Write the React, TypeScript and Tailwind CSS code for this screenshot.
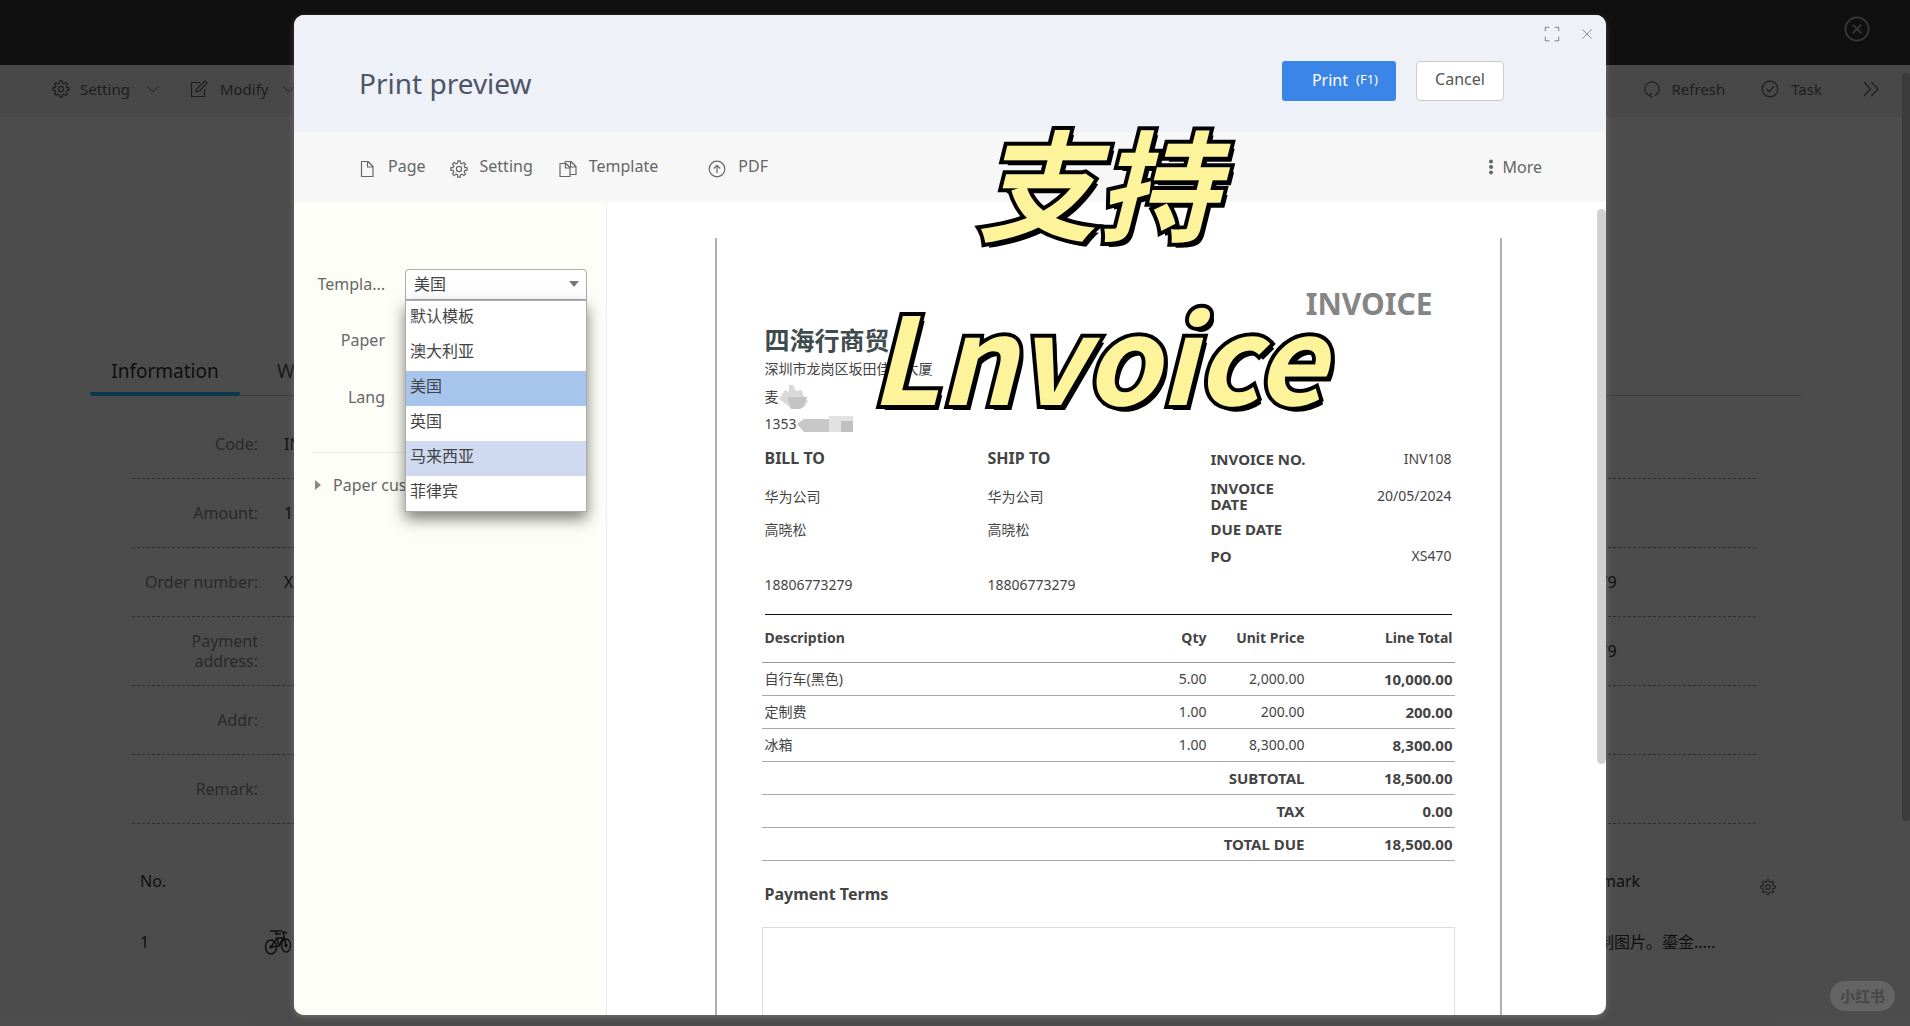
import { useState } from "react";
import type { ReactNode } from "react";

const SANS = "font-['Noto_Sans','Noto_Sans_CJK_SC',sans-serif]";

const TEMPLATES = ["默认模板", "澳大利亚", "美国", "英国", "马来西亚", "菲律宾"];

const FIELDS = [
  { label: "Code:", value: "INV108", extra: "" },
  { label: "Amount:", value: "18,500.00", extra: "" },
  { label: "Order number:", value: "XS470", extra: "18806773279" },
  { label: "Payment address:", value: "", extra: "18806773279" },
  { label: "Addr:", value: "", extra: "" },
  { label: "Remark:", value: "", extra: "" },
];

const LINES = [
  { name: "自行车(黑色)", qty: "5.00", price: "2,000.00", total: "10,000.00" },
  { name: "定制费", qty: "1.00", price: "200.00", total: "200.00" },
  { name: "冰箱", qty: "1.00", price: "8,300.00", total: "8,300.00" },
];

const TOTALS = [
  { label: "SUBTOTAL", value: "18,500.00" },
  { label: "TAX", value: "0.00" },
  { label: "TOTAL DUE", value: "18,500.00" },
];

interface IconProps {
  children: ReactNode;
  className?: string;
}

function Icon({ children, className = "size-[18px]" }: IconProps) {
  return (
    <svg
      viewBox="0 0 18 18"
      fill="none"
      stroke="currentColor"
      strokeWidth="1.2"
      strokeLinejoin="round"
      aria-hidden="true"
      className={`shrink-0 ${className}`}
    >
      {children}
    </svg>
  );
}

// eight teeth, four points each
const GEAR_POINTS = Array.from({ length: 8 }, (_, i) =>
  [
    [-14, 6],
    [-9, 8.2],
    [9, 8.2],
    [14, 6],
  ].map(([deg, r]) => {
    const a = ((i * 45 + deg) * Math.PI) / 180;
    return `${(9 + r * Math.sin(a)).toFixed(2)},${(9 - r * Math.cos(a)).toFixed(2)}`;
  }),
)
  .flat()
  .join(" ");

function GearIcon({ className }: { className?: string }) {
  return (
    <Icon className={className}>
      <polygon points={GEAR_POINTS} />
      <circle cx="9" cy="9" r="2.6" />
    </Icon>
  );
}

function PageIcon() {
  return (
    <Icon>
      <path d="M3.5 1.5h6.500l5 5v10h-11.500zM9.500 1.500v5.500h5" />
    </Icon>
  );
}

function CopyIcon() {
  return (
    <Icon>
      <path d="M1 3.500h6l4 4v9h-10zM6.500 3.500v4.500h4.500M6 3.500v-2h6l5 5v8h-6M11.500 1.500v5.500h5.500" />
    </Icon>
  );
}

function UploadIcon() {
  return (
    <Icon>
      <circle cx="9" cy="9" r="7.800" />
      <path d="M9 13V5.500M5.800 8.500L9 5.300l3.200 3.200" />
    </Icon>
  );
}

function ChevronDown() {
  return (
    <Icon className="size-3.5">
      <path d="M1.500 5.500l7.500 7 7.500-7" />
    </Icon>
  );
}

function BikeIcon() {
  return (
    <svg viewBox="0 0 30 28" fill="none" stroke="currentColor" strokeWidth="1.500" aria-hidden="true" className="h-7 w-[30px]">
      <ellipse cx="7" cy="19" rx="5.500" ry="7" />
      <ellipse cx="22" cy="17.500" rx="4.500" ry="6.500" />
      <path d="M7 19l6-9h6l-4 8zM13 10l2 8M22 17.500L19 4l4 1M6 3h12M12 6h5M12 3v4" />
      <circle cx="7" cy="19" r="1" />
      <circle cx="22" cy="17.500" r="1" />
    </svg>
  );
}

function AppPage() {
  return (
    <div className="min-h-screen bg-white text-[#333]">
      <header className="flex h-[65px] items-center justify-end bg-[#383838] pr-10 pb-2">
        <button aria-label="Close" className="text-[#bbb]">
          <Icon className="size-[26px]">
            <circle cx="9" cy="9" r="8" />
            <path d="M6 6l6 6M12 6l-6 6" />
          </Icon>
        </button>
      </header>

      <nav className="flex h-[52px] items-center justify-between bg-[#f2f2f2] pr-[30px] pb-1 pl-[52px] text-[15px] text-[#666]">
        <div className="flex items-center gap-[30px]">
          <button className="flex items-center">
            <GearIcon className="size-[18px]" />
            <span className="mr-4 ml-2.5">Setting</span>
            <ChevronDown />
          </button>
          <button className="flex items-center">
            <Icon>
              <path d="M10 2.500H1.500v14h13V9M6 12l1-3.500L15 1l2 2-7.500 8z" />
            </Icon>
            <span className="mr-3.5 ml-3">Modify</span>
            <ChevronDown />
          </button>
        </div>
        <div className="flex items-center gap-9">
          <button className="flex items-center gap-2.5">
            <Icon>
              <path d="M6 15.500A7.200 7.200 0 1 1 12 15.500M8.500 13l-2 2.700 3 1.600" />
            </Icon>
            Refresh
          </button>
          <button className="flex items-center gap-3">
            <Icon>
              <circle cx="9" cy="9" r="7.800" />
              <path d="M5.500 9l2.700 2.700 4.600-5.200" />
            </Icon>
            Task
          </button>
          <button aria-label="More actions" className="pl-1">
            <Icon>
              <path d="M2 2l6.500 7L2 16M9.500 2L16 9l-6.500 7" />
            </Icon>
          </button>
        </div>
      </nav>

      <main className="pt-[240px]">
        <div className="mr-[109px] ml-[90px] flex border-b border-[#ccc] text-[19px]">
          <a href="#information" className="-mb-px flex h-[39px] w-[150px] justify-center rounded-b-sm border-b-4 border-[#2cc0ff]">
            Information
          </a>
          <a href="#workflow" className="ml-[37px] text-[#555]">
            Workflow
          </a>
        </div>

        <dl className="mr-[154px] ml-[132px] pt-3.5">
          {FIELDS.map((field) => (
            <div key={field.label} className="grid h-[69px] grid-cols-[126px_1fr_240px] items-center gap-x-[26px] border-b border-dashed border-[#999] leading-5">
              <dt className="text-right text-[#8c8c8c]">{field.label}</dt>
              <dd>{field.value}</dd>
              <dd>{field.extra}</dd>
            </div>
          ))}
        </dl>

        <table className="mt-[27px] ml-[140px] w-[1640px] text-left">
          <thead>
            <tr className="h-[60px] text-[#333]">
              <th className="w-[124px] font-normal">No.</th>
              <th className="font-normal" />
              <th className="w-[178px] font-normal">Remark</th>
              <th className="w-5 pt-4 font-normal text-[#666]">
                <button aria-label="Column settings">
                  <GearIcon className="size-4" />
                </button>
              </th>
            </tr>
          </thead>
          <tbody>
            <tr className="h-[62px]">
              <td>1</td>
              <td>
                <BikeIcon />
              </td>
              <td className="whitespace-nowrap">定制图片。鎏金.....</td>
              <td />
            </tr>
          </tbody>
        </table>
      </main>
    </div>
  );
}

function Toolbar() {
  return (
    <div className="flex h-[70px] shrink-0 items-center justify-between bg-[#f7f7f7] pr-16 pl-16 text-[#666]">
      <div className="flex items-center pb-0.5">
        <button className="flex items-end gap-3">
          <PageIcon />
          Page
        </button>
        <button className="ml-6 flex items-end gap-3">
          <GearIcon />
          Setting
        </button>
        <button className="ml-[26px] flex items-end gap-3">
          <CopyIcon />
          Template
        </button>
        <button className="ml-[50px] flex items-end gap-3">
          <UploadIcon />
          PDF
        </button>
      </div>
      <button className="flex items-center gap-2">
        <svg viewBox="0 0 6 16" fill="currentColor" aria-hidden="true" className="h-4 w-1.5">
          <circle cx="3" cy="2.500" r="2" />
          <circle cx="3" cy="8" r="2" />
          <circle cx="3" cy="13.500" r="2" />
        </svg>
        More
      </button>
    </div>
  );
}

function Sidebar() {
  const [template, setTemplate] = useState("美国");

  return (
    <aside className="w-[313px] shrink-0 border-r border-[#ededed] bg-[#fefef8] px-[18px] pt-[66px] text-[#666]">
      <div className="flex h-[32px] items-center gap-[20px]">
        <label htmlFor="template" className="w-[73px] text-right">
          Templa...
        </label>
        <div className="relative">
          <select
            id="template"
            value={template}
            onChange={(e) => setTemplate(e.target.value)}
            className="block h-[31px] w-[182px] appearance-none rounded-t-sm border border-[#aaa] bg-white pl-2 leading-5 text-[#444]"
          >
            {TEMPLATES.map((name) => (
              <option key={name}>{name}</option>
            ))}
          </select>
          <svg viewBox="0 0 10 6" aria-hidden="true" className="pointer-events-none absolute top-3 right-2 h-1.5 w-2.5 fill-[#777]">
            <path d="M0 0h10L5 6z" />
          </svg>
          <ul role="listbox" className="absolute top-[31px] left-0 z-10 w-full border border-[#aaa] bg-white text-[#444] shadow-[0_7px_14px_rgba(0,0,0,0.5)]">
            {TEMPLATES.map((name) => (
              <li
                key={name}
                role="option"
                aria-selected={name === template}
                onClick={() => setTemplate(name)}
                className={`h-[35px] pl-1 leading-[30px] ${
                  name === template ? "bg-[#a6c4ec]" : name === "马来西亚" ? "bg-[#cfdaf0]" : ""
                }`}
              >
                {name}
              </li>
            ))}
          </ul>
        </div>
      </div>
      <div className="mt-6 flex h-[31px] items-center gap-[20px]">
        <label htmlFor="paper" className="w-[73px] text-right">
          Paper
        </label>
        <select id="paper" className="h-[31px] w-[182px] appearance-none rounded-sm border border-[#bbb] bg-white" />
      </div>
      <div className="mt-[26px] flex h-[31px] items-center gap-[20px]">
        <label htmlFor="lang" className="w-[73px] text-right">
          Lang
        </label>
        <select id="lang" className="h-[31px] w-[182px] appearance-none rounded-sm border border-[#bbb] bg-white" />
      </div>
      <div className="mt-10 border-t border-[#eee] pt-5">
        <button className="flex items-center gap-3 pl-[3px] whitespace-nowrap">
          <svg viewBox="0 0 6 10" aria-hidden="true" className="h-2.5 w-1.5 fill-[#888]">
            <path d="M0 0l6 5-6 5z" />
          </svg>
          Paper custom
        </button>
      </div>
    </aside>
  );
}

interface PartyProps {
  title: string;
  className?: string;
}

function Party({ title, className }: PartyProps) {
  return (
    <div className={className}>
      <h3 className="text-base leading-6 font-bold">{title}</h3>
      <p className="mt-4">华为公司</p>
      <p className="mt-[11px]">高晓松</p>
      <p className="mt-[33px]">18806773279</p>
    </div>
  );
}

function Invoice() {
  return (
    <article className="mt-9 h-full w-[787px] shrink-0 border-x-2 border-[#b0b0b0] px-[45px] pt-[46px] text-sm leading-[22px] text-[#444]">
      <h1 className="pr-[22px] text-right text-3xl leading-10 font-bold text-[#858585]">INVOICE</h1>
      <div className="px-[3px]">
        <h2 className="mt-[-2px] text-[25px] leading-[36px] font-bold text-[#3f4c4f]">四海行商贸</h2>
        <p>深圳市龙岗区坂田佳华大厦</p>
        <p className="mt-[5px] flex items-center">
          麦
          <svg viewBox="0 0 30 24" aria-hidden="true" className="h-6 w-[30px]">
            <path d="M0 14l6-9 4 2V0h4l3 6 6-1 1 5 5 6-4 6-5 2H13l-5-4z" fill="#d9d9d9" />
            <path d="M8 12h20l-3 9-4 3h-9z" fill="#c4c4c4" />
          </svg>
        </p>
        <p className="mt-1 flex items-center">
          1353
          <svg viewBox="0 0 56 18" aria-hidden="true" className="h-[18px] w-14">
            <path d="M0 9l7-5h25v13H7z" fill="#c8c8c8" />
            <path d="M32 1h24v5H44v11H32z" fill="#e2e2e2" />
            <path d="M44 6h12v11H44z" fill="#c0c0c0" />
          </svg>
        </p>

        <div className="mt-[11px] flex h-[168px]">
          <Party title="BILL TO" className="w-[223px]" />
          <Party title="SHIP TO" className="w-[223px]" />
          <table className="h-fit flex-1 leading-4">
            <tbody>
              <tr className="h-[26px]">
                <th className="w-[98px] text-left text-[15px] whitespace-nowrap">INVOICE NO.</th>
                <td className="text-right">INV108</td>
              </tr>
              <tr className="h-[48px]">
                <th className="text-left text-[15px] leading-4">
                  INVOICE
                  <br />
                  DATE
                </th>
                <td className="text-right">20/05/2024</td>
              </tr>
              <tr className="h-[18px]">
                <th className="text-left text-[15px]">DUE DATE</th>
                <td />
              </tr>
              <tr className="h-[36px]">
                <th className="text-left text-[15px]">PO</th>
                <td className="text-right">XS470</td>
              </tr>
            </tbody>
          </table>
        </div>
        <hr className="border-[#111]" />
      </div>

      <table className="w-full">
        <thead>
          <tr className="h-[47px] border-b border-[#999]">
            <th className="pl-[3px] text-left">Description</th>
            <th className="w-[70px] text-right">Qty</th>
            <th className="w-[98px] text-right">Unit Price</th>
            <th className="w-[150px] pr-0.5 text-right">Line Total</th>
          </tr>
        </thead>
        <tbody>
          {LINES.map((line) => (
            <tr key={line.name} className="h-[33px] border-b border-[#aaa]">
              <td className="pl-[3px]">{line.name}</td>
              <td className="text-right">{line.qty}</td>
              <td className="text-right">{line.price}</td>
              <td className="pr-0.5 text-right text-[15px] font-bold">{line.total}</td>
            </tr>
          ))}
          {TOTALS.map((row) => (
            <tr key={row.label} className="h-[33px] border-b border-[#aaa] text-[15px] font-bold">
              <td colSpan={3} className="text-right">
                {row.label}
              </td>
              <td className="pr-0.5 text-right">{row.value}</td>
            </tr>
          ))}
        </tbody>
      </table>

      <h3 className="mt-[21px] pl-[3px] text-base leading-6 font-bold">Payment Terms</h3>
      <div className="mt-[21px] h-[120px] border border-[#ddd]" />
    </article>
  );
}

function PrintPreview() {
  return (
    <section
      role="dialog"
      aria-label="Print preview"
      className="relative flex w-full max-w-[1312px] flex-col overflow-hidden rounded-[10px] bg-white shadow-[0_2px_6px_rgba(255,255,255,0.2)]"
    >
      <header className="flex h-[117px] shrink-0 items-start justify-between bg-[#eef1f8] pl-[65px]">
        <h1 className="mt-[46px] text-[28px] leading-[44px] text-[#4d5568]">Print preview</h1>
        <div className="flex">
          <div className="mt-[46px] flex gap-5">
            <button className="flex h-10 w-[114px] items-center justify-end rounded-[3px] bg-[#3b85e8] pr-[18px] pb-0.5 text-white">
              Print <span className="ml-2 text-[13px]">(F1)</span>
            </button>
            <button className="h-10 w-[88px] rounded-[4px] border border-[#ccc] bg-white pb-1 text-[#555]">Cancel</button>
          </div>
          <div className="mt-[11px] mr-3 ml-10 flex h-4 gap-5 text-[#888]">
            <button aria-label="Full screen">
              <Icon className="size-4">
                <path d="M1.500 6V1.500H6M12 1.500h4.500V6M16.500 12v4.500H12M6 16.500H1.500V12" />
              </Icon>
            </button>
            <button aria-label="Close preview">
              <Icon className="size-3.5">
                <path d="M3 3l12 12M15 3L3 15" />
              </Icon>
            </button>
          </div>
        </div>
      </header>
      <Toolbar />
      <div className="flex min-h-0 flex-1">
        <Sidebar />
        <div className="flex min-w-0 flex-1 justify-center overflow-hidden pl-[3px]">
          <Invoice />
        </div>
      </div>
      <div className="absolute top-[194px] right-0 h-[555px] w-[9px] rounded-full bg-[#d0d2d2]" />
      <div className="pointer-events-none absolute top-[79px] right-[18px] left-[313px] text-center font-['Noto_Sans_CJK_SC',sans-serif] text-[120px] leading-[173px] font-bold text-[#fcf39a] italic [-webkit-text-stroke:8px_#000] [paint-order:stroke_fill] [text-shadow:4px_5px_0_#000]">
        <p>支持</p>
        <p>Lnvoice</p>
      </div>
    </section>
  );
}

export default function App() {
  return (
    <div className={`relative h-screen overflow-hidden text-base ${SANS}`}>
      <AppPage />
      <div className="absolute inset-0 flex justify-center bg-black/70 pt-[15px] pr-2.5 pb-[11px]">
        <PrintPreview />
      </div>
      <div className="absolute top-[73px] right-0 h-[748px] w-2 rounded-full bg-[#3b3b3b]" />
      <div className="absolute right-[15px] bottom-[15px] flex h-[30px] w-[65px] items-center justify-center rounded-full bg-[#646464] text-[15px] font-black text-[#4b4b4b]">
        小红书
      </div>
    </div>
  );
}
